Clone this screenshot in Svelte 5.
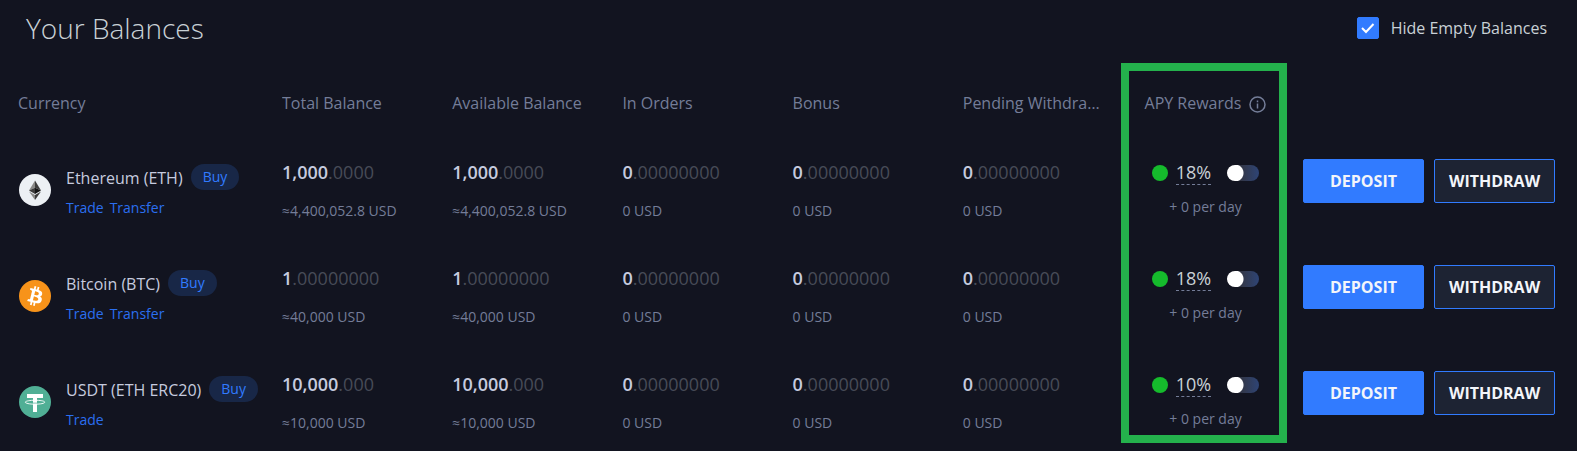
<script lang="ts">
  type Amount = { whole: string; decimals: string; usd: string };

  type Balance = {
    icon: "eth" | "btc" | "usdt";
    name: string;
    links: string[];
    amounts: Amount[];
    apy: number;
    perDay: number;
    rewards: boolean;
  };

  const empty: Amount = { whole: "0", decimals: ".00000000", usd: "0 USD" };

  const eth = { whole: "1,000", decimals: ".0000", usd: "≈4,400,052.8 USD" };
  const btc = { whole: "1", decimals: ".00000000", usd: "≈40,000 USD" };
  const usdt = { whole: "10,000", decimals: ".000", usd: "≈10,000 USD" };

  const columns = [
    "Total Balance",
    "Available Balance",
    "In Orders",
    "Bonus",
    "Pending Withdrawals",
  ];

  let hideEmpty = $state(true);
  let balances = $state<Balance[]>([
    {
      icon: "eth",
      name: "Ethereum (ETH)",
      links: ["Trade", "Transfer"],
      amounts: [eth, eth, empty, empty, empty],
      apy: 18,
      perDay: 0,
      rewards: false,
    },
    {
      icon: "btc",
      name: "Bitcoin (BTC)",
      links: ["Trade", "Transfer"],
      amounts: [btc, btc, empty, empty, empty],
      apy: 18,
      perDay: 0,
      rewards: false,
    },
    {
      icon: "usdt",
      name: "USDT (ETH ERC20)",
      links: ["Trade"],
      amounts: [usdt, usdt, empty, empty, empty],
      apy: 10,
      perDay: 0,
      rewards: false,
    },
  ]);
</script>

{#snippet coin(icon: Balance["icon"])}
  <svg class="coin" viewBox="0 0 32 32" aria-hidden="true">
    {#if icon === "eth"}
      <circle cx="16" cy="16" r="16" fill="#ecf0f4" />
      <path d="M16 6.5 10 16.4 16 13.8Z" fill="#8a8a88" />
      <path d="M16 6.5 22 16.4 16 13.8Z" fill="#3c3c3b" />
      <path d="M16 13.8 10 16.4 16 19.9Z" fill="#3c3c3b" />
      <path d="M16 13.8 22 16.4 16 19.9Z" fill="#141414" />
      <path d="M10 17.6 16 21.1V26Z" fill="#8a8a88" />
      <path d="M22 17.6 16 21.1V26Z" fill="#3c3c3b" />
    {:else if icon === "btc"}
      <circle cx="16" cy="16" r="16" fill="#f7931a" />
      <path
        fill="#fff"
        d="M23.189 14.02c.314-2.096-1.283-3.223-3.465-3.975l.708-2.84-1.728-.43-.69 2.765c-.454-.114-.92-.22-1.385-.326l.695-2.783L15.596 6l-.708 2.839c-.376-.086-.746-.17-1.104-.26l.002-.009-2.384-.595-.46 1.846s1.283.294 1.256.312c.7.175.826.638.805 1.006l-.806 3.235c.048.012.11.03.18.057l-.183-.045-1.13 4.532c-.086.212-.303.531-.793.41.018.025-1.256-.313-1.256-.313l-.858 1.978 2.25.561c.418.105.828.215 1.231.318l-.715 2.872 1.727.43.708-2.84c.472.127.93.245 1.378.357l-.706 2.828 1.728.43.715-2.866c2.948.558 5.164.333 6.097-2.333.752-2.146-.037-3.385-1.588-4.192 1.13-.26 1.98-1.003 2.207-2.538zm-3.95 5.538c-.533 2.147-4.148.986-5.32.695l.95-3.805c1.172.293 4.929.872 4.37 3.11zm.535-5.569c-.487 1.953-3.495.96-4.47.717l.86-3.45c.975.243 4.118.696 3.61 2.733z"
      />
    {:else}
      <circle cx="16" cy="16" r="16" fill="#50af95" />
      <path d="M8 8h16v4h-6v14h-4V12H8Z" fill="#fff" />
      <path
        d="M14 14.3c-4.6.2-7.7.9-7.7 1.9s4 2 9.7 2 9.7-.9 9.7-2-3.1-1.7-7.7-1.9"
        fill="none"
        stroke="#fff"
        stroke-width="0.9"
      />
      <path d="M14 17.1c1.3.1 2.7.1 4 0" fill="none" stroke="#50af95" stroke-width="0.7" />
    {/if}
  </svg>
{/snippet}

<main>
  <header>
    <h1>Your Balances</h1>
    <label class="hide-empty">
      <input type="checkbox" bind:checked={hideEmpty} />
      <svg viewBox="0 0 22 22" aria-hidden="true"><path d="m5 11 4 4 7.5-8" /></svg>
      <span>Hide Empty Balances</span>
    </label>
  </header>

  <div class="balances">
    <table>
      <thead>
        <tr>
          <th class="currency-col">Currency</th>
          {#each columns as column}
            <th><div class="ellipsis">{column}</div></th>
          {/each}
          <th class="apy-col">
            <div class="apy-title">
              APY Rewards
              <svg viewBox="0 0 17 17" aria-hidden="true">
                <circle cx="8.5" cy="8.5" r="7.5" />
                <path d="M8.5 4.5v1.7M8.5 7.5v5" />
              </svg>
            </div>
          </th>
          <th class="actions-col" aria-label="Actions"></th>
        </tr>
      </thead>
      <tbody>
        {#each balances as balance}
          <tr>
            <td>
              <div class="currency">
                {@render coin(balance.icon)}
                <div>
                  <div class="name">
                    <span>{balance.name}</span>
                    <button class="buy">Buy</button>
                  </div>
                  <nav>
                    {#each balance.links as link}
                      <a href="#{link.toLowerCase()}">{link}</a>
                    {/each}
                  </nav>
                </div>
              </div>
            </td>
            {#each balance.amounts as amount}
              <td>
                <div class="amount">
                  {amount.whole}<span>{amount.decimals}</span>
                </div>
                <div class="usd">{amount.usd}</div>
              </td>
            {/each}
            <td>
              <div class="apy">
                <i class="dot"></i>
                <span class="rate">{balance.apy}%</span>
                <input
                  type="checkbox"
                  role="switch"
                  aria-label="{balance.name} rewards"
                  bind:checked={balance.rewards}
                />
              </div>
              <div class="per-day">+ {balance.perDay} per day</div>
            </td>
            <td>
              <div class="actions">
                <button class="deposit">DEPOSIT</button>
                <button class="withdraw">WITHDRAW</button>
              </div>
            </td>
          </tr>
        {/each}
      </tbody>
    </table>
    <div class="highlight"></div>
  </div>
</main>

<style>
  :global(body) {
    background: #121420;
  }

  main {
    padding: 0 22px 0 18px;
    color: #c6cbdf;
    font-family: "Open Sans", "Noto Sans", sans-serif;
    font-size: 16px;
    line-height: 24px;
  }

  button,
  input {
    margin: 0;
    font-family: inherit;
    cursor: pointer;
  }

  header {
    display: flex;
    align-items: center;
    justify-content: space-between;
    height: 56px;
    padding: 0 8px;
  }

  h1 {
    margin: 0;
    color: #c9d1d6;
    font-size: 28px;
    font-weight: 300;
    line-height: 40px;
  }

  .hide-empty {
    display: grid;
    grid-template-columns: 22px auto;
    column-gap: 12px;
    align-items: center;
    color: #c9d1d6;
    cursor: pointer;

    input,
    svg {
      grid-area: 1 / 1;
      width: 22px;
      height: 22px;
    }

    input {
      appearance: none;
      border: 1px solid #317bff;
      border-radius: 2px;
    }

    input:checked {
      background: #317bff;
    }

    svg {
      fill: none;
      stroke: #fff;
      stroke-width: 2;
      pointer-events: none;
    }

    input:not(:checked) + svg {
      visibility: hidden;
    }
  }

  .balances {
    position: relative;
    padding-top: 7px;
  }

  table {
    width: 100%;
    table-layout: fixed;
    border-collapse: collapse;
  }

  th {
    height: 96px;
    padding: 0 0 16px;
    box-sizing: border-box;
    color: #747d98;
    font-weight: 400;
    text-align: left;
  }

  td {
    height: 106px;
    padding: 0;
    vertical-align: top;
  }

  tr:last-child td {
    height: 80px;
  }

  .currency-col {
    width: 264px;
  }

  .apy-col {
    width: 145px;
  }

  .actions-col {
    width: 277px;
  }

  .ellipsis {
    margin-right: 24px;
    overflow: hidden;
    text-overflow: ellipsis;
    white-space: nowrap;
  }

  .apy-title {
    display: flex;
    align-items: center;
    justify-content: center;
    gap: 8px;
    white-space: nowrap;

    svg {
      width: 17px;
      height: 17px;
      margin-top: 3px;
      fill: none;
      stroke: #747d98;
      stroke-width: 1.5;
    }
  }

  .currency {
    display: flex;
    gap: 15px;
    padding: 5px 0 0 1px;
    white-space: nowrap;
  }

  .coin {
    flex: none;
    width: 32px;
    height: 32px;
    margin-top: 10px;
  }

  .name {
    display: flex;
    align-items: end;
    gap: 8px;
  }

  .buy {
    height: 26px;
    padding: 0 12px;
    border: 0;
    border-radius: 13px;
    background: #182747;
    color: #317bff;
    font-size: 14px;
    line-height: 26px;
  }

  nav {
    display: flex;
    gap: 6px;
    margin-top: 6px;
    font-size: 14px;
  }

  a {
    color: #2b6ff0;
    text-decoration: none;
  }

  .amount {
    padding-top: 1px;
    font-size: 18px;
    font-weight: 600;

    span {
      color: #474b57;
      font-weight: 400;
    }
  }

  .usd {
    margin-top: 15px;
    color: #747d98;
    font-size: 14px;
  }

  .apy {
    display: flex;
    align-items: center;
    justify-content: center;
    padding-top: 1px;

    input {
      appearance: none;
      width: 32px;
      height: 16px;
      margin-left: 16px;
      border-radius: 8px;
      background:
        radial-gradient(circle at 8px 8px, #fff 8px, transparent 9px),
        linear-gradient(90deg, #333644 40%, #2e4475);
    }

    input:checked {
      background:
        radial-gradient(circle at 24px 8px, #fff 8px, transparent 9px),
        #317bff;
    }
  }

  .dot {
    width: 16px;
    height: 16px;
    margin-right: 8px;
    border-radius: 50%;
    background: #15bb2c;
  }

  .rate {
    border-bottom: 1px dashed #747d98;
    color: #c9d1d6;
    font-size: 18px;
  }

  .per-day {
    margin-top: 10px;
    color: #747d98;
    font-size: 14px;
    text-align: center;
  }

  .actions {
    display: grid;
    grid-template-columns: 1fr 1fr;
    gap: 10px;
    padding-left: 25px;

    button {
      height: 44px;
      padding: 0;
      border: 1px solid #317bff;
      border-radius: 2px;
      color: #f3f5fa;
      font-size: 16px;
      font-weight: 700;
    }
  }

  .deposit {
    background: #317bff;
  }

  .withdraw {
    background: #1d2333;
  }

  .highlight {
    position: absolute;
    top: 7px;
    right: 268px;
    bottom: 8px;
    width: 166px;
    box-sizing: border-box;
    border: 8px solid #24b14c;
    pointer-events: none;
  }
</style>
